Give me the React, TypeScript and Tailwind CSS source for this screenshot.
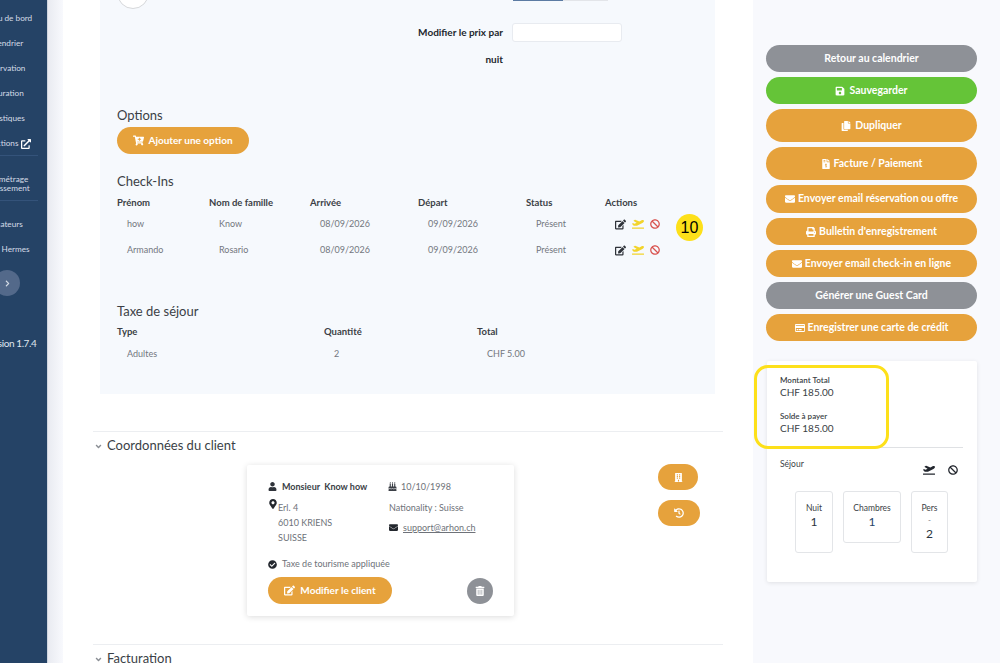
import React from "react";
import {
  FaEdit, FaPlaneDeparture, FaBan, FaCartPlus, FaSave, FaCopy, FaFileInvoiceDollar, FaEnvelope, FaPrint,
  FaRegCreditCard, FaUser, FaBirthdayCake, FaMapMarkerAlt, FaCheckCircle, FaTrashAlt, FaBuilding, FaHistory,
  FaExternalLinkAlt, FaChevronRight, FaAngleDown,
} from "react-icons/fa";

const FONT = "font-['Lato','Liberation_Sans',sans-serif]";

function NavText({ children, className = "" }: { children: React.ReactNode; className?: string }) {
  return <div className={`flex h-[25px] items-center whitespace-nowrap text-[8.2px] leading-[9px] text-[#d5dce6] ${className}`}>{children}</div>;
}

function Sidebar() {
  return (
    <aside className="flex h-full w-[48px] shrink-0 flex-col overflow-hidden border-r border-[#cfd5df] bg-[#254366]">
      <div className="ml-[-25px] w-[84px] pt-[6px]">
        <NavText>Tableau de bord</NavText>
        <NavText><span className="ml-[11px]">Calendrier</span></NavText>
        <NavText><span className="ml-[8px]">Réservation</span></NavText>
        <NavText><span className="ml-[8px]">Facturation</span></NavText>
        <NavText><span className="ml-[8px]">Statistiques</span></NavText>
        <NavText>
          <span className="ml-[13px]">Sections</span>
          <FaExternalLinkAlt className="ml-[3px] text-[10px] text-white" />
        </NavText>
        <div className="mt-[-1px] h-px w-[63px] bg-[#34537a]" />
        <div className="mb-[7px] mt-[19px] whitespace-nowrap text-[8.2px] leading-[9px] text-[#d5dce6]">
          <div className="ml-[8px]">Paramétrage</div>
          <div className="ml-[5px]">établissement</div>
        </div>
        <div className="h-px w-[63px] bg-[#34537a]" />
        <div className="mt-[11px]">
          <NavText><span className="ml-[7px]">Utilisateurs</span></NavText>
          <NavText><span className="ml-[9px]">Mail Hermes</span></NavText>
        </div>
        <div className="ml-[19px] mt-[8px] flex h-[26px] w-[26px] items-center justify-center rounded-full bg-[#53698a]">
          <FaChevronRight className="text-[7px] text-[#d5dce6]" />
        </div>
        <div className="ml-[9px] mt-[40px] whitespace-nowrap text-[10px] leading-[14px] tracking-[-0.4px] text-[#dfe5ee]">Version 1.7.4</div>
      </div>
    </aside>
  );
}

const headCell = "text-[9.5px] font-bold leading-[12px] text-[#3b3f46]";
const bodyCell = "pl-[10px] text-[9px] leading-[12px] text-[#73777e]";
const cols = "grid grid-cols-[92px_101px_108px_108px_79px_1fr]";
const taxCols = "grid grid-cols-[207px_153px_1fr]";

function ActionIcons() {
  return (
    <div className="flex items-center gap-[6px]">
      <FaEdit className="text-[11px] text-[#2f333a]" />
      <FaPlaneDeparture className="text-[12px] text-[#f2d42c]" />
      <FaBan className="text-[10px] text-[#d9534f]" />
    </div>
  );
}

function CheckRow({ first, last }: { first: string; last: string }) {
  return (
    <div className={`${cols} h-[26px] items-center`}>
      <div className={bodyCell}>{first}</div>
      <div className={bodyCell}>{last}</div>
      <div className={bodyCell}>08/09/2026</div>
      <div className={bodyCell}>09/09/2026</div>
      <div className={bodyCell}>Présent</div>
      <div className="pl-[10px]"><ActionIcons /></div>
    </div>
  );
}

function Panel() {
  return (
    <section className="relative ml-[37px] h-[394px] w-[615px] bg-[#f6f9fd] px-[17px] text-[#3b3f46]">
      <div className="flex h-[23px] items-start justify-between">
        <div className="mt-[-23px] h-[32px] w-[32px] rounded-full border border-[#d6d8db] bg-white" />
        <div className="mr-[90px] flex h-[1px] w-[95px]">
          <div className="w-[50px] bg-[#5c7ba3]" />
          <div className="w-[45px] bg-[#e3e5e9]" />
        </div>
      </div>
      <div className="flex justify-end pr-[76px]">
        <div className="mt-[-4px] w-[100px] text-right text-[10px] font-bold leading-[27px] text-[#23272e]">
          Modifier le prix par nuit
        </div>
        <div className="ml-[9px] h-[19px] w-[110px] rounded-[3px] border border-[#e8ebf0] bg-white" />
      </div>
      <h3 className="mt-[33px] text-[13px] leading-[18px] text-[#3b3f46]">Options</h3>
      <button className="mt-[3px] flex h-[27px] w-[132px] items-center justify-center gap-[4px] rounded-full bg-[#e6a23c] text-[10px] font-bold text-white">
        <FaCartPlus className="text-[11px]" />Ajouter une option
      </button>
      <h3 className="mt-[18px] text-[13px] leading-[18px] text-[#3b3f46]">Check-Ins</h3>
      <div className={`${cols} mt-[7px]`}>
        {["Prénom", "Nom de famille", "Arrivée", "Départ", "Status", "Actions"].map((h) => (
          <div key={h} className={headCell}>{h}</div>
        ))}
      </div>
      <div className="mt-[2px]">
        <CheckRow first="how" last="Know" />
        <CheckRow first="Armando" last="Rosario" />
      </div>
      <h3 className="mt-[39px] text-[13px] leading-[18px] text-[#3b3f46]">Taxe de séjour</h3>
      <div className={`${taxCols} mt-[6px]`}>
        {["Type", "Quantité", "Total"].map((h) => (
          <div key={h} className={headCell}>{h}</div>
        ))}
      </div>
      <div className={`${taxCols} mt-[10px]`}>
        <div className={bodyCell}>Adultes</div>
        <div className={bodyCell}>2</div>
        <div className={bodyCell}>CHF 5.00</div>
      </div>
      <div className="absolute left-[576px] top-[214px] flex h-[27px] w-[27px] items-center justify-center rounded-full bg-[#fde01a] font-['Liberation_Sans',sans-serif] text-[16px] text-black">
        10
      </div>
    </section>
  );
}

function ClientCard() {
  return (
    <div className="flex h-full w-[267px] flex-col rounded-[2px] bg-white px-[21px] pt-[14px] shadow-[0_1px_6px_rgba(0,0,0,0.14)]">
      <div className="grid grid-cols-[120px_1fr] text-[9px] leading-[15px] text-[#6e7279]">
        <div>
          <div className="flex items-center font-bold text-[#3b3f46]">
            <FaUser className="mr-[5px] text-[9px] text-[#2f333a]" />
            <span>Monsieur&nbsp; Know how</span>
          </div>
          <div className="mt-[6px] flex">
            <FaMapMarkerAlt className="mt-[-1px] shrink-0 text-[10px] text-[#23272e]" />
            <div>
              <div>Erl. 4</div>
              <div>6010 KRIENS</div>
              <div>SUISSE</div>
            </div>
          </div>
        </div>
        <div>
          <div className="flex items-center">
            <FaBirthdayCake className="mr-[4px] text-[9px] text-[#3b3f46]" />10/10/1998
          </div>
          <div className="ml-[1px] mt-[6px]">Nationality : Suisse</div>
          <div className="ml-[1px] mt-[5px] flex items-center">
            <FaEnvelope className="mr-[5px] text-[9px] text-[#23272e]" />
            <span className="underline">support@arhon.ch</span>
          </div>
        </div>
      </div>
      <div className="mt-[13px] flex items-center text-[9px] leading-[12px] text-[#6e7279]">
        <FaCheckCircle className="mr-[5px] text-[9px] text-[#23272e]" />Taxe de tourisme appliquée
      </div>
      <div className="mt-[7px] flex items-center justify-between">
        <button className="flex h-[27px] w-[124px] items-center justify-center gap-[5px] rounded-full bg-[#e6a23c] text-[10px] font-bold text-white">
          <FaEdit className="text-[11px]" />Modifier le client
        </button>
        <div className="flex h-[26px] w-[26px] items-center justify-center rounded-full bg-[#8e9197]">
          <FaTrashAlt className="text-[10px] text-white" />
        </div>
      </div>
    </div>
  );
}

function Main() {
  return (
    <main className="h-full w-[690px] shrink-0 overflow-hidden bg-white">
      <Panel />
      <div className="ml-[30px] mt-[37px] w-[630px] border-t border-[#eceef1]">
        <div className="mt-[6px] flex h-[16px] items-center text-[13px] text-[#3b3f46]">
          <FaAngleDown className="ml-[1px] mr-[4px] text-[9px] text-[#8a8e94]" />Coordonnées du client
        </div>
        <div className="mt-[11px] flex h-[151px]">
          <div className="ml-[154px]"><ClientCard /></div>
          <div className="ml-[144px] mt-[-1px] flex flex-col gap-[10px]">
            <div className="flex h-[26px] w-[40px] items-center justify-center rounded-full bg-[#e6a23c]">
              <FaBuilding className="text-[9px] text-white" />
            </div>
            <div className="flex h-[26px] w-[42px] items-center justify-center rounded-full bg-[#e6a23c]">
              <FaHistory className="text-[10px] text-white" />
            </div>
          </div>
        </div>
        <div className="mt-[28px] border-t border-[#eceef1]">
          <div className="mt-[6px] flex h-[16px] items-center text-[13px] text-[#3b3f46]">
            <FaAngleDown className="ml-[1px] mr-[4px] text-[9px] text-[#8a8e94]" />Facturation
          </div>
        </div>
      </div>
    </main>
  );
}

function SideButton({ h, color, icon, children }: { h: string; color: string; icon?: React.ReactNode; children: React.ReactNode }) {
  return (
    <button className={`flex ${h} ${color} w-[211px] items-center justify-center gap-[3px] rounded-full text-[10.5px] font-bold text-white`}>
      {icon}
      {children}
    </button>
  );
}

const orange = "bg-[#e6a23c]";
const gray = "bg-[#8e9197]";

function StatBox({ w, h, label, value, extra, valueColor = "text-[#2a3340]" }: { w: string; h: string; label: string; value: string; extra?: boolean; valueColor?: string }) {
  return (
    <div className={`flex ${w} ${h} flex-col items-center rounded-[3px] border border-[#e3e5e8] pt-[11px]`}>
      <div className="text-[8.5px] leading-[11px] text-[#3b3f46]">{label}</div>
      {extra && <div className="text-[8px] leading-[12px] text-[#6e7279]">-</div>}
      <div className={`text-[12px] leading-[15px] ${valueColor}`}>{value}</div>
    </div>
  );
}

function RightColumn() {
  return (
    <aside className="flex h-full flex-1 flex-col bg-[#f8f9fd] pl-[13px] pt-[45px]">
      <div className="flex flex-col gap-[5px]">
        <SideButton h="h-[27px]" color={gray}>Retour au calendrier</SideButton>
        <SideButton h="h-[27px]" color="bg-[#65c438]" icon={<FaSave className="mr-[1px] text-[10px]" />}>Sauvegarder</SideButton>
        <SideButton h="h-[33px]" color={orange} icon={<FaCopy className="mr-[1px] text-[10px]" />}>Dupliquer</SideButton>
        <SideButton h="h-[33px]" color={orange} icon={<FaFileInvoiceDollar className="text-[10px]" />}>Facture / Paiement</SideButton>
        <SideButton h="h-[28px]" color={orange} icon={<FaEnvelope className="text-[10px]" />}>Envoyer email réservation ou offre</SideButton>
        <SideButton h="h-[27px]" color={orange} icon={<FaPrint className="text-[10px]" />}>Bulletin d'enregistrement</SideButton>
        <SideButton h="h-[27px]" color={orange} icon={<FaEnvelope className="text-[10px]" />}>Envoyer email check-in en ligne</SideButton>
        <SideButton h="h-[27px]" color={gray}>Générer une Guest Card</SideButton>
        <SideButton h="h-[27px]" color={orange} icon={<FaRegCreditCard className="text-[10px]" />}>Enregistrer une carte de crédit</SideButton>
      </div>
      <div className="relative ml-[1px] mt-[20px] h-[221px] w-[210px] rounded-[2px] bg-white px-[13px] pt-[14px] shadow-[0_1px_4px_rgba(0,0,0,0.1)]">
        <div className="text-[8px] font-semibold leading-[11px] text-[#3b3f46]">Montant Total</div>
        <div className="mt-[-1px] text-[10px] leading-[14px] text-[#3b3f46]">CHF 185.00</div>
        <div className="mt-[12px] text-[8px] font-semibold leading-[11px] text-[#3b3f46]">Solde à payer</div>
        <div className="mt-[-1px] text-[10px] leading-[14px] text-[#3b3f46]">CHF 185.00</div>
        <div className="mr-[1px] mt-[12px] h-px bg-[#dfe1e4]" />
        <div className="mt-[11px] flex justify-between pr-[6px]">
          <div className="text-[8.5px] leading-[11px] text-[#3b3f46]">Séjour</div>
          <div className="flex items-center gap-[13px] pt-[5px]">
            <FaPlaneDeparture className="text-[12px] text-[#23272e]" />
            <FaBan className="text-[10px] text-[#23272e]" />
          </div>
        </div>
        <div className="ml-[15px] mt-[15px] flex items-start gap-[10px]">
          <StatBox w="w-[38px]" h="h-[62px]" label="Nuit" value="1" />
          <StatBox w="w-[58px]" h="h-[52px]" label="Chambres" value="1" valueColor="text-[#25446a]" />
          <StatBox w="w-[37px]" h="h-[62px]" label="Pers" value="2" extra />
        </div>
        <div className="absolute left-[-13px] top-[4px] h-[84px] w-[135px] rounded-[14px] border-[3px] border-[#fde01a]" />
      </div>
    </aside>
  );
}

export default function App() {
  return (
    <div className={`flex h-[663px] w-[1000px] overflow-hidden bg-white ${FONT}`}>
      <Sidebar />
      <div className="h-full w-[15px] shrink-0 bg-gradient-to-r from-[#e9ebf1] to-[#f8f9fd]" />
      <Main />
      <RightColumn />
    </div>
  );
}
